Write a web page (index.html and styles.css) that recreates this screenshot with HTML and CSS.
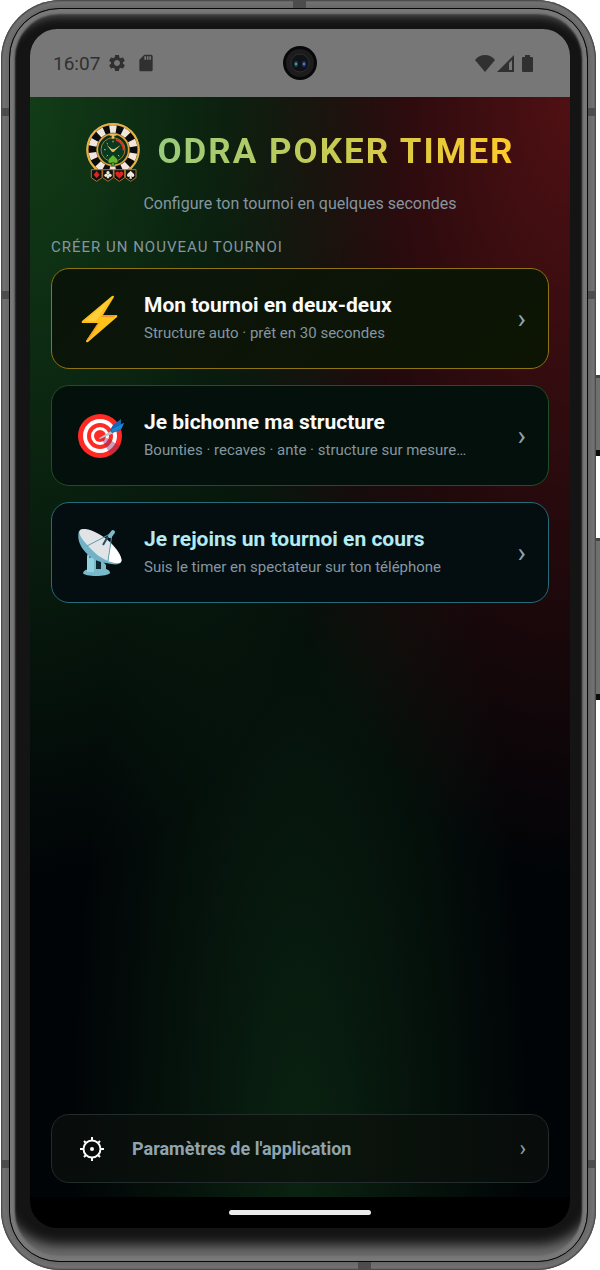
FILE: index.html
```html
<!DOCTYPE html>
<html lang="fr">

<head>
    <meta charset="utf-8">
    <meta name="viewport" content="width=device-width, initial-scale=1">
    <title>Odra Poker Timer</title>
    <link rel="stylesheet" href="styles.css">
</head>

<body>
    <div class="phone">
        <span class="side_button power"></span>
        <span class="side_button volume"></span>
        <span class="antenna antenna_top"></span>
        <span class="antenna antenna_bottom"></span>
        <span class="antenna_side row_1"></span>
        <span class="antenna_side row_2"></span>
        <span class="antenna_side row_3"></span>
        <div class="bezel">
            <div class="screen">
                <!-- STATUS BAR -->
                <div class="status_bar">
                    <div class="status_left">
                        <span class="clock">16:07</span>
                        <svg class="status_icon" viewBox="0 0 24 24"><path d="M19.14 12.94c.04-.3.06-.61.06-.94 0-.32-.02-.64-.07-.94l2.03-1.58c.18-.14.23-.41.12-.61l-1.92-3.32c-.12-.22-.37-.29-.59-.22l-2.39.96c-.5-.38-1.03-.7-1.62-.94l-.36-2.54c-.04-.24-.24-.41-.48-.41h-3.84c-.24 0-.43.17-.47.41l-.36 2.54c-.59.24-1.13.57-1.62.94l-2.39-.96c-.22-.08-.47 0-.59.22L2.74 8.87c-.12.21-.08.47.12.61l2.03 1.58c-.05.3-.09.63-.09.94s.02.64.07.94l-2.03 1.58c-.18.14-.23.41-.12.61l1.92 3.32c.12.22.37.29.59.22l2.39-.96c.5.38 1.03.7 1.62.94l.36 2.54c.05.24.24.41.48.41h3.84c.24 0 .44-.17.47-.41l.36-2.54c.59-.24 1.13-.56 1.62-.94l2.39.96c.22.08.47 0 .59-.22l1.92-3.32c.12-.22.07-.47-.12-.61l-2.01-1.58zM12 15.6c-1.98 0-3.6-1.62-3.6-3.6s1.62-3.6 3.6-3.6 3.6 1.62 3.6 3.6-1.62 3.6-3.6 3.6z"/></svg>
                        <svg class="status_icon" viewBox="0 0 24 24"><path d="M18 2h-8L4 8v12c0 1.1.9 2 2 2h12c1.1 0 2-.9 2-2V4c0-1.100-.9-2-2-2zm-6 6h-2V4h2v4zm3 0h-2V4h2v4zm3 0h-2V4h2v4z"/></svg>
                    </div>
                    <div class="camera">
                        <svg viewBox="0 0 34 34">
                            <circle cx="17" cy="17" r="17" fill="#080808"/>
                            <circle cx="17" cy="17" r="14" fill="#1c1c1e"/>
                            <circle cx="17" cy="17" r="9" fill="#101216" stroke="#2b2c30"/>
                            <ellipse cx="13" cy="18" rx="2" ry="3" fill="#1d4750"/>
                            <ellipse cx="21" cy="18" rx="2" ry="3" fill="#22396c"/>
                            <circle cx="13" cy="18" r="1" fill="#62b5b9"/>
                            <circle cx="21" cy="18" r="1" fill="#668be0"/>
                        </svg>
                    </div>
                    <div class="status_right">
                        <svg class="wifi_icon" viewBox="0 0 20 17"><path d="M10 17 0 5Q4 0 10 0t10 5z"/></svg>
                        <svg class="signal_icon" viewBox="0 0 17 17"><path d="M17 0v17H0zM15 5l-3 3v7h3z" fill-rule="evenodd"/></svg>
                        <svg class="battery_icon" viewBox="0 0 11 17"><path d="M3 0h5v2h2q1 0 1 1v13q0 1-1 1H1q-1 0-1-1V3q0-1 1-1h2z"/></svg>
                    </div>
                </div>

                <!-- HOME PAGE -->
                <main class="home">
                    <header class="header">
                        <div class="brand">
                            <svg class="logo" viewBox="36 34 168 184">
                                <circle cx="120" cy="119" r="80" fill="#c8963a"/>
                                <circle cx="120" cy="119" r="76" fill="#6d4712"/>
                                <circle cx="120" cy="119" r="62" fill="none" stroke="#0b0b0b" stroke-width="23"/>
                                <circle cx="120" cy="119" r="62" fill="none" stroke="#f0e6dc" stroke-width="23" pathLength="200" stroke-dasharray="10 10" transform="rotate(-99 120 119)"/>
                                <circle cx="120" cy="119" r="77" fill="none" stroke="#e3b04c" stroke-width="6"/>
                                <circle cx="120" cy="119" r="47" fill="#0a2c18" stroke="#d9a443" stroke-width="5"/>
                                <circle cx="120" cy="119" r="36" fill="#083a20" stroke="#a87a2c" stroke-width="3"/>
                                <path d="M110 72h20v5h-6v9h-8v-9h-6z" fill="#e9bd5c"/>
                                <path d="M129 89a31 31 0 0 1 23 32" fill="none" stroke="#e03329" stroke-width="6"/>
                                <path d="M120 92v5M93 119h5M101 99l4 4M101 139l4-4M139 139l-4-4" stroke="#d9b467" stroke-width="3"/>
                                <path d="m101 105 19 15 24-16-22 21-6-1z" fill="#f2d27b"/>
                                <circle cx="120" cy="121" r="5" fill="#e4b552"/>
                                <path d="M120 134c-5 7-15 11-15 19 0 8 9 9 13 4l-3 9h10l-3-9c4 5 13 4 13-4 0-8-10-12-15-19z" fill="#64b52f" stroke="#1c4b15" stroke-width="2"/>
                                <g fill="#111" stroke="#a8762d" stroke-width="3">
                                    <path d="M55 179h32v24l-16 11-16-11z"/>
                                    <path d="M89 179h32v24l-16 11-16-11z"/>
                                    <path d="M123 179h32v24l-16 11-16-11z"/>
                                    <path d="M157 179h32v24l-16 11-16-11z"/>
                                </g>
                                <path d="m71 183 9 11-9 11-9-11z" fill="#db2424"/>
                                <path d="M139 206c-5-5-12-9-12-16 0-6 9-8 12-2 3-6 12-4 12 2 0 7-7 11-12 16z" fill="#db2424"/>
                                <g fill="#eee9df">
                                    <circle cx="105" cy="188" r="5"/>
                                    <circle cx="99" cy="196" r="5"/>
                                    <circle cx="111" cy="196" r="5"/>
                                    <path d="M104 190h2l3 15h-8z"/>
                                    <path d="M173 182c-4 5-11 8-11 14 0 5 6 6 9 3l-2 7h8l-2-7c3 3 9 2 9-3 0-6-7-9-11-14z"/>
                                </g>
                            </svg>
                            <h1>ODRA POKER TIMER</h1>
                        </div>
                        <p class="subtitle">Configure ton tournoi en quelques secondes</p>
                    </header>

                    <h2 class="section_label">CRÉER UN NOUVEAU TOURNOI</h2>
                    <div class="card_list">
                        <button type="button" class="card card_gold">
                            <svg class="card_icon" viewBox="0 0 48 48">
                                <defs>
                                    <linearGradient id="bolt" x1="0" y1="0" x2="1" y2="1">
                                        <stop offset="0" stop-color="#feb804"/>
                                        <stop offset="1" stop-color="#ffca28"/>
                                    </linearGradient>
                                </defs>
                                <path d="M34 1 4 26q-1 2 1 2h15L8 46q0 2 2 1l29-25q1-2-1-2H25L36 2q0-2-2-1z" fill="url(#bolt)"/>
                                <path d="M33 3 7 26h11z" fill="#ffe36c" opacity=".45"/>
                                <path d="m20 28 2-1-11 17-3 2zM25 20h13l-2 2H23z" fill="#f79329"/>
                            </svg>
                            <span class="card_text">
                                <span class="card_title">Mon tournoi en deux-deux</span>
                                <span class="card_desc">Structure auto · prêt en 30 secondes</span>
                            </span>
                            <span class="chevron">›</span>
                        </button>

                        <button type="button" class="card card_green">
                            <svg class="card_icon" viewBox="0 0 48 48">
                                <circle cx="22" cy="24" r="22" fill="#ff2a23"/>
                                <circle cx="22" cy="24" r="17" fill="#fff"/>
                                <circle cx="22" cy="24" r="13" fill="#ff2a23"/>
                                <circle cx="22" cy="24" r="9" fill="#fff"/>
                                <circle cx="22" cy="24" r="6" fill="#ff2a23"/>
                                <path d="m24 27 5-1 13 8a22 22 0 0 1-9 9l-7-11z" fill="#8b2b63" opacity=".45"/>
                                <path d="m21 26 14-8 1 3-14 6z" fill="#b0c8d0"/>
                                <path d="m32 18 3-5 8-6v5l3-1-3 7-9 3z" fill="#1468b5"/>
                                <path d="m33 18 13-7-3 6-8 3z" fill="#1f84d2"/>
                            </svg>
                            <span class="card_text">
                                <span class="card_title">Je bichonne ma structure</span>
                                <span class="card_desc">Bounties · recaves · ante · structure sur mesure…</span>
                            </span>
                            <span class="chevron">›</span>
                        </button>

                        <button type="button" class="card card_cyan">
                            <svg class="card_icon" viewBox="0 0 48 48">
                                <path d="M5 44q1-4 8-4V27l8 1 7 8v4q4 1 4 4c-2 4-26 4-27 0z" fill="#78b9ca"/>
                                <path d="M18 31l5 1v8h-5z" fill="#0a2730"/>
                                <path d="M9 28q0-4 3-4t4 4v15H9z" fill="#94d1df"/>
                                <circle cx="12" cy="28" r="1" fill="#376c7b"/>
                                <path d="M1 2c-4 13 9 29 27 32 8 2 14 2 15-1z" fill="#72b2c7"/>
                                <path d="M2 1C8-3 24 5 33 14c8 8 12 16 10 19-5 3-20-2-29-12C5 12-1 4 2 1z" fill="#e1e4e6"/>
                                <path d="M43 33c2-3-3-11-10-18l-3 17c6 2 11 3 13 1z" fill="#fff"/>
                                <path d="M9 17 34 4M34 5l-4 27" fill="none" stroke="#6199ae" stroke-width="1"/>
                                <path d="m33 6-4 3-4 7" fill="none" stroke="#244e60" stroke-width="2"/>
                                <path d="m32 7 3-4" stroke="#7fb9ca" stroke-width="4" stroke-linecap="round"/>
                            </svg>
                            <span class="card_text">
                                <span class="card_title">Je rejoins un tournoi en cours</span>
                                <span class="card_desc">Suis le timer en spectateur sur ton téléphone</span>
                            </span>
                            <span class="chevron">›</span>
                        </button>
                    </div>

                    <button type="button" class="settings">
                        <svg class="settings_icon" viewBox="0 0 24 24">
                            <circle cx="12" cy="12" r="8.500"/>
                            <path d="M12 3.500V0M12 20.500V24M3.500 12H0M20.500 12H24M6 6 4 4M18 6l2-2M6 18l-2 2M18 18l2 2"/>
                            <circle class="dot" cx="12" cy="12" r="2"/>
                        </svg>
                        <span class="settings_text">Paramètres de l'application</span>
                        <span class="chevron chevron_small">›</span>
                    </button>
                </main>

                <div class="nav_bar"><span class="nav_handle"></span></div>
            </div>
        </div>
    </div>
</body>

</html>
```
FILE: styles.css
```css
* {
    box-sizing: border-box;
}

body {
    margin: 0;
    padding: 0 4px 0 1px;
    font-family: Roboto, "Noto Sans", sans-serif;
    background-color: #ffffff;
}

h1,
h2,
p {
    margin: 0;
}

/* PHONE FRAME */
.phone {
    position: relative;
    display: flex;
    min-height: 100vh;
    padding: 8px;
    border-radius: 60px;
    background-color: #696969;
    box-shadow: inset 0 0 2px 1px #3c3c3c, inset 0 0 5px 3px #7c7c7c;
}

.side_button {
    position: absolute;
    left: 100%;
    width: 4px;
    background-color: #707070;
    border-top: 3px solid #444444;
    border-bottom: 6px solid #0c0c0c;
}

.power {
    top: 375px;
    height: 81px;
}

.volume {
    top: 538px;
    height: 162px;
}

.antenna {
    position: absolute;
    width: 13px;
    height: 8px;
    background-color: #4c4c4c;
}

.antenna_top {
    top: 1px;
    left: 49%;
}

.antenna_bottom {
    bottom: 1px;
    left: 60%;
}

.antenna_side {
    position: absolute;
    left: 0;
    right: 0;
    height: 8px;
    border: solid #4c4c4c;
    border-width: 0 8px;
}

.row_1 {
    top: 108px;
}

.row_2 {
    top: 291px;
}

.row_3 {
    bottom: 102px;
}

.bezel {
    position: relative;
    flex: 1;
    display: flex;
    padding: 20px 17px 33px 20px;
    border: 1px solid #080808;
    border-radius: 50px;
    background-color: #141414;
    box-shadow: inset 0 0 2px 5px #787878, inset 0 -26px 12px -10px #6c6c6c, inset 0 14px 8px -6px #505050;
}

.screen {
    flex: 1;
    display: flex;
    flex-direction: column;
    border-radius: 27px;
    overflow: hidden;
    background-color: #000000;
}

/* STATUS BAR */
.status_bar {
    display: grid;
    grid-template-columns: 1fr 34px 1fr;
    align-items: center;
    height: 68px;
    background-color: #777777;
    color: #303030;
    fill: #303030;
}

.status_left {
    display: flex;
    align-items: center;
    gap: 7px;
    padding-left: 23px;
}

.clock {
    font-size: 19px;
}

.status_icon {
    width: 20px;
    height: 20px;
}

.status_left .status_icon + .status_icon {
    margin-left: 2px;
}

.camera {
    width: 34px;
    height: 34px;
}

.status_right {
    display: flex;
    justify-content: flex-end;
    gap: 2px;
    padding-right: 37px;
}

.wifi_icon {
    width: 20px;
    height: 17px;
}

.signal_icon {
    width: 17px;
    height: 17px;
}

.battery_icon {
    width: 11px;
    height: 17px;
    margin-left: 6px;
}

/* HOME */
.home {
    flex: 1;
    display: flex;
    flex-direction: column;
    padding: 24px 21px 14px;
    background:
        radial-gradient(ellipse at 0% 0%, #123d17, transparent 50%),
        radial-gradient(ellipse at 100% 0%, #501013, transparent 50%),
        radial-gradient(ellipse at 50% 100%, #0a2311, transparent 60%),
        #010407;
}

.header {
    display: flex;
    flex-direction: column;
    align-items: center;
}

.brand {
    display: flex;
    align-items: center;
    gap: 16px;
}

.logo {
    width: 56px;
    height: 62px;
}

h1 {
    font-size: 35px;
    line-height: 40px;
    font-weight: 700;
    letter-spacing: 2px;
    color: transparent;
    background: linear-gradient(90deg, #98cb7c, #c8cb52 50%, #ffca28);
    background-clip: text;
    -webkit-background-clip: text;
}

.subtitle {
    margin-top: 11px;
    font-size: 16px;
    line-height: 20px;
    color: #8496a0;
}

.section_label {
    margin-top: 24px;
    font-size: 15px;
    line-height: 18px;
    font-weight: 400;
    letter-spacing: 1px;
    color: #8496a0;
}

.card_list {
    display: flex;
    flex-direction: column;
    gap: 16px;
    margin-top: 12px;
}

.card,
.settings {
    display: flex;
    align-items: center;
    width: 100%;
    font-family: inherit;
    text-align: left;
    cursor: pointer;
}

.card {
    gap: 18px;
    min-height: 101px;
    padding: 0 22px 0 26px;
    border: 1px solid;
    border-radius: 18px;
}

.card_gold {
    background-color: #0b1607;
    background-image: linear-gradient(135deg, #0a150a, #0d1404);
    border-color: #8f7413;
}

.card_green {
    background-color: #04100b;
    border-color: #1f4f26;
}

.card_cyan {
    background-color: #040e11;
    border-color: #266b78;
}

.card_icon {
    width: 48px;
    height: 48px;
}

.card_text {
    flex: 1;
    display: flex;
    flex-direction: column;
    gap: 5px;
    padding-bottom: 3px;
}

.card_title {
    font-size: 21px;
    line-height: 26px;
    font-weight: 700;
    color: #fafafa;
}

.card_cyan .card_title {
    color: #b2ebf2;
}

.card_desc {
    font-size: 15px;
    line-height: 20px;
    color: #8496a0;
}

.chevron {
    font-size: 28px;
    line-height: 32px;
    color: #90a4ae;
}

.settings {
    gap: 28px;
    min-height: 69px;
    margin-top: auto;
    padding: 0 22px 0 28px;
    border: 1px solid #222c2c;
    border-radius: 18px;
    background: linear-gradient(90deg, #080c0b, #0b150c 50%, #080c0b);
}

.settings_icon {
    width: 24px;
    height: 24px;
    fill: none;
    stroke: #fafafa;
    stroke-width: 2;
}

.settings_icon .dot {
    fill: #fafafa;
    stroke: none;
}

.settings_text {
    flex: 1;
    font-size: 18px;
    line-height: 20px;
    font-weight: 700;
    color: #90a4ae;
}

.chevron_small {
    font-size: 22px;
    line-height: 24px;
}

/* NAVIGATION BAR */
.nav_bar {
    display: flex;
    align-items: center;
    justify-content: center;
    height: 31px;
}

.nav_handle {
    width: 142px;
    height: 5px;
    border-radius: 3px;
    background-color: #ebebeb;
}
```
